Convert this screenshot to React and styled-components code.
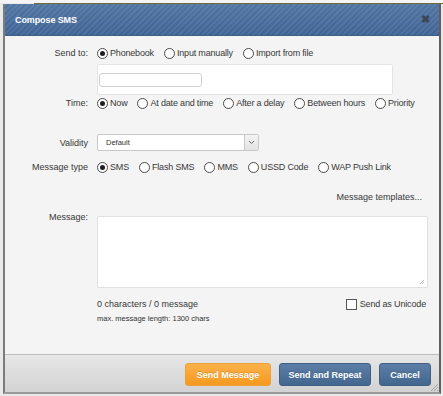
import React from "react";
import styled, { createGlobalStyle } from "styled-components";

const Global = createGlobalStyle`
  html, body { margin: 0; padding: 0; }
  body {
    background: #ececec;
    font-family: "Liberation Sans", Arial, sans-serif;
    width: 443px;
    height: 396px;
    overflow: hidden;
  }
`;

const Page = styled.div`
  position: relative;
  height: 396px;
  padding: 4px 2px 0 3px;
  box-sizing: border-box;
  background: linear-gradient(#f4f4f4, #f4f4f4) top / 100% 3px no-repeat, #e9e9e9;
`;

const TopLine = styled.div`
  position: absolute;
  top: 3px;
  left: 34px;
  right: 0;
  height: 1px;
  background: #6f6a3c;
`;

const Dialog = styled.div`
  width: 438px;
  box-sizing: border-box;
  border-left: 2px solid #7c7c7c;
  border-right: 2px solid #5f5f5f;
  border-bottom: 2px solid #9a9a9a;
  background: #f4f4f4;
  display: flex;
  flex-direction: column;
`;

const TitleBar = styled.div`
  height: 31px;
  display: flex;
  align-items: center;
  justify-content: space-between;
  padding: 0 9px 0 10px;
  background:
    repeating-linear-gradient(135deg, rgba(255,255,255,0.05) 0 2px, rgba(0,0,0,0.04) 2px 4px),
    linear-gradient(#5479a5, #43679a);
  border-bottom: 1px solid #3b5d86;
`;

const Title = styled.span`
  color: #fff;
  font-weight: bold;
  font-size: 9px;
  letter-spacing: -0.1px;
`;

const Close = styled.span`
  color: #3a4555;
  font-weight: bold;
  font-size: 11px;
  line-height: 1;
`;

const Body = styled.div`
  height: 318px;
  box-sizing: border-box;
  padding-top: 11px;
  display: flex;
  flex-direction: column;
`;

const Row = styled.div`
  display: flex;
  align-items: ${(p) => p.$align || "center"};
  margin-top: ${(p) => p.$mt || 0}px;
`;

const Label = styled.div`
  width: 83px;
  margin-right: 9px;
  margin-top: ${(p) => p.$shift || 0}px;
  text-align: right;
  font-size: 9px;
  color: #383838;
  line-height: 12px;
  flex-shrink: 0;
`;

const Options = styled.div`
  display: flex;
  align-items: center;
  gap: 10px;
`;

const Option = styled.label`
  display: flex;
  align-items: center;
  gap: 2px;
  font-size: 9px;
  line-height: 12px;
  color: #383838;
  letter-spacing: -0.18px;
  white-space: nowrap;
`;

const RadioDot = styled.span`
  width: 9px;
  height: 9px;
  border: 1px solid #4a4a4a;
  border-radius: 50%;
  background: #fff;
  display: flex;
  align-items: center;
  justify-content: center;
  box-sizing: content-box;
  &::after {
    content: "";
    width: 5px;
    height: 5px;
    border-radius: 50%;
    background: ${(p) => (p.$checked ? "#1f1f1f" : "transparent")};
  }
`;

const Radio = ({ checked, children }) => (
  <Option>
    <RadioDot $checked={checked} />
    {children}
  </Option>
);

const RecipientBox = styled.div`
  margin-left: 92px;
  width: 296px;
  height: 31px;
  box-sizing: border-box;
  background: #fff;
  border: 1px solid #e4e4e4;
  border-radius: 2px;
  display: flex;
  align-items: center;
  padding-left: 1px;
  margin-top: 5px;
`;

const TextInput = styled.div`
  width: 103px;
  height: 14px;
  box-sizing: border-box;
  border: 1px solid #cfcfcf;
  border-radius: 3px;
  background: #fff;
`;

const Select = styled.div`
  width: 162px;
  height: 17px;
  box-sizing: border-box;
  border: 1px solid #c9c9c9;
  border-radius: 2px;
  background: #fff;
  display: flex;
  align-items: stretch;
`;

const SelectText = styled.div`
  flex: 1;
  font-size: 7.5px;
  color: #333;
  padding-left: 8px;
  display: flex;
  align-items: center;
`;

const SelectArrow = styled.div`
  width: 13px;
  border-left: 1px solid #c9c9c9;
  background: linear-gradient(#f3f3f3, #e3e3e3);
  display: flex;
  align-items: center;
  justify-content: center;
`;

const Templates = styled.div`
  align-self: flex-end;
  margin-right: 17px;
  font-size: 9px;
  color: #383838;
  line-height: 12px;
  margin-top: 18px;
`;

const TextArea = styled.div`
  position: relative;
  width: 331px;
  height: 72px;
  box-sizing: border-box;
  background: #fff;
  border: 1px solid #e0e0e0;
  border-radius: 2px;
`;

const Grip = styled.svg`
  position: absolute;
  right: 2px;
  bottom: 2px;
`;

const CounterRow = styled.div`
  display: flex;
  justify-content: space-between;
  align-items: center;
  margin-left: 92px;
  margin-right: 13px;
  margin-top: 10px;
`;

const Counter = styled.div`
  font-size: 9px;
  color: #383838;
  line-height: 12px;
`;

const CheckLabel = styled.label`
  display: flex;
  align-items: center;
  gap: 3px;
  font-size: 9px;
  color: #383838;
  line-height: 12px;
  letter-spacing: -0.15px;
`;

const CheckBox = styled.span`
  width: 9px;
  height: 9px;
  border: 1px solid #555;
  background: #fff;
  box-sizing: content-box;
`;

const Hint = styled.div`
  margin-left: 92px;
  margin-top: 4px;
  font-size: 7.5px;
  color: #333;
  line-height: 10px;
`;

const Footer = styled.div`
  position: relative;
  height: 38px;
  box-sizing: border-box;
  border-top: 1px solid #bdbdbd;
  background: linear-gradient(#e6e6e6, #d3d3d3);
  display: flex;
  justify-content: flex-end;
  align-items: flex-start;
  gap: 8px;
  padding: 8px 8px 0 0;
`;

const Button = styled.button`
  height: 23px;
  width: ${(p) => p.$w}px;
  border-radius: 3px;
  font-family: "Liberation Sans", Arial, sans-serif;
  font-weight: bold;
  font-size: 9px;
  color: #fff;
  padding: 0;
  cursor: pointer;
  border: 1px solid ${(p) => (p.$orange ? "#e9a23b" : "#3f5f85")};
  background: ${(p) =>
    p.$orange
      ? "linear-gradient(#fbb24a, #f6991f)"
      : "linear-gradient(#5c7ea6, #43668f)"};
  text-shadow: 0 -1px 0 rgba(0,0,0,0.15);
`;

const FooterGrip = styled.svg`
  position: absolute;
  right: 0;
  bottom: 0;
`;

export default function App() {
  return (
    <>
      <Global />
      <Page>
        <TopLine />
        <Dialog>
          <TitleBar>
            <Title>Compose SMS</Title>
            <Close>✖</Close>
          </TitleBar>
          <Body>
            <Row>
              <Label>Send to:</Label>
              <Options>
                <Radio checked>Phonebook</Radio>
                <Radio>Input manually</Radio>
                <Radio>Import from file</Radio>
              </Options>
            </Row>
            <RecipientBox>
              <TextInput />
            </RecipientBox>
            <Row $mt={2}>
              <Label>Time:</Label>
              <Options>
                <Radio checked>Now</Radio>
                <Radio>At date and time</Radio>
                <Radio>After a delay</Radio>
                <Radio>Between hours</Radio>
                <Radio>Priority</Radio>
              </Options>
            </Row>
            <Row $mt={25}>
              <Label>Validity</Label>
              <Select>
                <SelectText>Default</SelectText>
                <SelectArrow>
                  <svg width="7" height="5" viewBox="0 0 7 5">
                    <path d="M1 1 L3.5 3.5 L6 1" fill="none" stroke="#666" strokeWidth="1" />
                  </svg>
                </SelectArrow>
              </Select>
            </Row>
            <Row $mt={10}>
              <Label>Message type</Label>
              <Options>
                <Radio checked>SMS</Radio>
                <Radio>Flash SMS</Radio>
                <Radio>MMS</Radio>
                <Radio>USSD Code</Radio>
                <Radio>WAP Push Link</Radio>
              </Options>
            </Row>
            <Templates>Message templates...</Templates>
            <Row $mt={13} $align="flex-start">
              <Label $shift={-5}>Message:</Label>
              <TextArea>
                <Grip width="6" height="6" viewBox="0 0 6 6">
                  <path d="M5 1 L1 5 M5 3 L3 5" stroke="#aaa" strokeWidth="0.8" />
                </Grip>
              </TextArea>
            </Row>
            <CounterRow>
              <Counter>0 characters / 0 message</Counter>
              <CheckLabel>
                <CheckBox />
                Send as Unicode
              </CheckLabel>
            </CounterRow>
            <Hint>max. message length: 1300 chars</Hint>
          </Body>
          <Footer>
            <Button $orange $w={86}>Send Message</Button>
            <Button $w={92}>Send and Repeat</Button>
            <Button $w={52}>Cancel</Button>
            <FooterGrip width="10" height="10" viewBox="0 0 10 10">
              <path d="M9 2 L2 9 M9 5 L5 9 M9 8 L8 9" stroke="#9a9a9a" strokeWidth="0.8" />
            </FooterGrip>
          </Footer>
        </Dialog>
      </Page>
    </>
  );
}
